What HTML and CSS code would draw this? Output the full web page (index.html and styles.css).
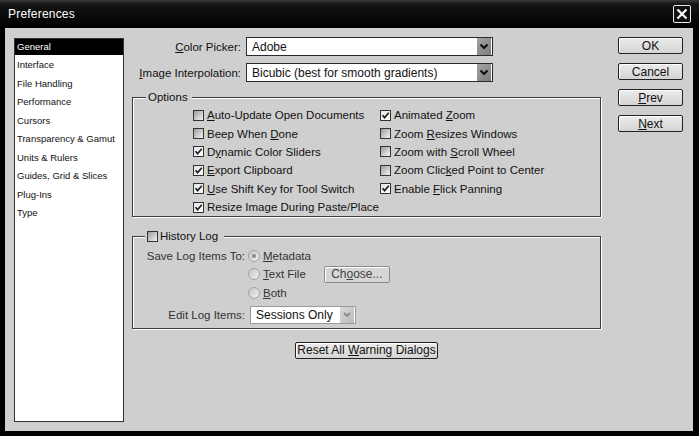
FILE: index.html
```html
<!DOCTYPE html>
<html lang="en">
<head>
    <meta charset="UTF-8">
    <title>Preferences</title>
    <link rel="stylesheet" href="styles.css">
</head>
<body>
<div class="window">
    <div class="titlebar">
        <span class="title">Preferences</span>
        <span class="close">
            <svg width="16" height="16" viewBox="0 0 16 16"><path d="M3.5 3.5 L12.5 12.5 M12.5 3.5 L3.5 12.5" stroke="#fff" stroke-width="2.2" fill="none"/></svg>
        </span>
    </div>
    <div class="client">
        <ul class="nav">
            <li class="active">General</li>
            <li>Interface</li>
            <li>File Handling</li>
            <li>Performance</li>
            <li>Cursors</li>
            <li>Transparency &amp; Gamut</li>
            <li>Units &amp; Rulers</li>
            <li>Guides, Grid &amp; Slices</li>
            <li>Plug-Ins</li>
            <li>Type</li>
        </ul>

        <div class="main">
            <div class="pickers">
                <span class="lbl"><u>C</u>olor Picker:</span>
                <div class="select">
                    <span class="value">Adobe</span>
                    <span class="arrow"><svg width="14" height="17" viewBox="0 0 14 17"><path d="M3.5 6.5 L7 10 L10.5 6.5" stroke="#111" stroke-width="2.2" fill="none"/></svg></span>
                </div>
                <span class="lbl"><u>I</u>mage Interpolation:</span>
                <div class="select">
                    <span class="value">Bicubic (best for smooth gradients)</span>
                    <span class="arrow"><svg width="14" height="17" viewBox="0 0 14 17"><path d="M3.5 6.5 L7 10 L10.5 6.5" stroke="#111" stroke-width="2.2" fill="none"/></svg></span>
                </div>
            </div>

            <fieldset class="group options">
                <legend>Options</legend>
                <div class="checks">
                    <div class="check"><span class="box"></span><span><u>A</u>uto-Update Open Documents</span></div>
                    <div class="check"><span class="box"></span><span>Beep When <u>D</u>one</span></div>
                    <div class="check"><span class="box on"><svg width="9" height="9" viewBox="0 0 9 9"><path d="M1.5 4.2 L3.6 6.6 L7.8 1.8" stroke="#222" stroke-width="1.7" fill="none"/></svg></span><span>D<u>y</u>namic Color Sliders</span></div>
                    <div class="check"><span class="box on"><svg width="9" height="9" viewBox="0 0 9 9"><path d="M1.5 4.2 L3.6 6.6 L7.8 1.8" stroke="#222" stroke-width="1.7" fill="none"/></svg></span><span><u>E</u>xport Clipboard</span></div>
                    <div class="check"><span class="box on"><svg width="9" height="9" viewBox="0 0 9 9"><path d="M1.5 4.2 L3.6 6.6 L7.8 1.8" stroke="#222" stroke-width="1.7" fill="none"/></svg></span><span><u>U</u>se Shift Key for Tool Switch</span></div>
                    <div class="check"><span class="box on"><svg width="9" height="9" viewBox="0 0 9 9"><path d="M1.5 4.2 L3.6 6.6 L7.8 1.8" stroke="#222" stroke-width="1.7" fill="none"/></svg></span><span>Resize Image During Paste/Place</span></div>

                    <div class="check"><span class="box on"><svg width="9" height="9" viewBox="0 0 9 9"><path d="M1.5 4.2 L3.6 6.6 L7.8 1.8" stroke="#222" stroke-width="1.7" fill="none"/></svg></span><span>Animated <u>Z</u>oom</span></div>
                    <div class="check"><span class="box"></span><span>Zoom <u>R</u>esizes Windows</span></div>
                    <div class="check"><span class="box"></span><span>Zoom with <u>S</u>croll Wheel</span></div>
                    <div class="check"><span class="box"></span><span>Zoom Clic<u>k</u>ed Point to Center</span></div>
                    <div class="check"><span class="box on"><svg width="9" height="9" viewBox="0 0 9 9"><path d="M1.5 4.2 L3.6 6.6 L7.8 1.8" stroke="#222" stroke-width="1.7" fill="none"/></svg></span><span>Enable <u>F</u>lick Panning</span></div>
                </div>
            </fieldset>

            <fieldset class="group history">
                <legend><span class="box"></span><span>History Log</span></legend>
                <div class="log">
                    <span class="lbl row1">Save Log Items To:</span>
                    <div class="radio"><span class="dot on"></span><span><u>M</u>etadata</span></div>
                    <div class="radio"><span class="dot"></span><span><u>T</u>ext File</span><span class="btn small"><span>Ch<u>o</u>ose...</span></span></div>
                    <div class="radio"><span class="dot"></span><span><u>B</u>oth</span></div>
                    <span class="lbl row4">Edit Log Items:</span>
                    <div class="select narrow">
                        <span class="value">Sessions Only</span>
                        <span class="arrow"><svg width="14" height="16" viewBox="0 0 14 16"><path d="M4 6 L7 9 L10 6" stroke="#888" stroke-width="1.8" fill="none"/></svg></span>
                    </div>
                </div>
            </fieldset>

            <span class="btn reset"><span>Reset All <u>W</u>arning Dialogs</span></span>
        </div>

        <div class="buttons">
            <span class="btn"><span>OK</span></span>
            <span class="btn"><span>Cancel</span></span>
            <span class="btn"><span><u>P</u>rev</span></span>
            <span class="btn"><span><u>N</u>ext</span></span>
        </div>
    </div>
</div>
</body>
</html>
```

FILE: styles.css
```css
* {
    box-sizing: border-box;
}
html,
body {
    margin: 0;
    padding: 0;
    background: #000;
}
body {
    font-family: "Liberation Sans", Arial, sans-serif;
    font-size: 11.5px;
    color: #111;
}
u {
    text-underline-offset: 1px;
}
.window {
    width: 699px;
    height: 436px;
    padding: 0 6px 5px 5px;
    display: flex;
    flex-direction: column;
    background: #000;
}
.titlebar {
    height: 28px;
    flex: none;
    display: flex;
    align-items: center;
    background: linear-gradient(#3a3a3a 0, #151515 4px, #000 100%);
    margin: 0 -6px 0 -5px;
    padding: 0 8px 0 8px;
}
.title {
    color: #fff;
    font-size: 12px;
    letter-spacing: 0.2px;
}
.close {
    margin-left: auto;
    width: 18px;
    height: 18px;
    border: 1px solid #e8e8e8;
    border-radius: 2px;
    display: flex;
    align-items: center;
    justify-content: center;
    background: #111;
}
.client {
    flex: 1;
    display: flex;
    align-items: flex-start;
    padding: 9px 10px 0 9px;
    background: #cfcfcf;
}
.nav {
    width: 110px;
    height: 384px;
    margin: 1px 0 0 0;
    padding: 0;
    list-style: none;
    background: #fff;
    border: 1px solid #333;
    font-size: 9.5px;
}
.nav li {
    height: 16px;
    line-height: 16px;
    margin-bottom: 2.44px;
    padding-left: 2px;
    white-space: nowrap;
}
.nav li.active {
    background: #000;
    color: #fff;
}
.main {
    width: 469px;
    margin-left: 8px;
    display: flex;
    flex-direction: column;
}
.pickers {
    display: grid;
    grid-template-columns: 109px 247px;
    column-gap: 5px;
    row-gap: 7px;
    align-items: center;
}
.lbl {
    text-align: right;
    white-space: nowrap;
}
.select {
    height: 19px;
    display: flex;
    align-items: center;
    background: #fff;
    border: 1px solid #2a2a2a;
    padding-left: 5px;
}
.select .value {
    font-size: 12px;
}
.select .arrow {
    margin-left: auto;
    margin-right: 1px;
    width: 14px;
    height: 17px;
    display: flex;
    background: linear-gradient(135deg, #a4a4a4, #7c7c7c);
}
.group {
    margin: 8px 0 0 0;
    padding: 0;
    min-width: 0;
    border: 1px solid #3c3c3c;
    box-shadow: 1px 1px 0 #fff, inset 1px 1px 0 #fff;
}
.group legend {
    margin-left: 13px;
    padding: 0 4px 0 2px;
    line-height: 15px;
    background: #cfcfcf;
}
.checks {
    display: grid;
    grid-template-columns: 187px auto;
    grid-template-rows: repeat(6, 18.4px);
    grid-auto-flow: column;
    padding: 1px 0 0 60px;
}
.check {
    display: flex;
    align-items: center;
    gap: 3px;
    white-space: nowrap;
}
.box {
    width: 11px;
    height: 11px;
    flex: none;
    border: 1px solid #333;
    background: linear-gradient(135deg, #9c9c9c, #f4f4f4);
    display: flex;
    align-items: center;
    justify-content: center;
}
.box.on {
    background: linear-gradient(135deg, #e4e4e4, #fff);
}
.history {
    margin-top: 12px;
}
.history legend {
    margin-left: 12px;
    padding: 0 6px 0 2px;
    display: flex;
    align-items: center;
    gap: 2px;
}
.log {
    display: grid;
    grid-template-columns: 103px auto;
    grid-template-rows: 18.5px 18.5px 18.5px 26px;
    column-gap: 3px;
    align-items: center;
    padding: 2px 0 0 9px;
    color: #333;
}
.log .row1 {
    grid-row: 1;
}
.log .radio {
    grid-column: 2;
    display: flex;
    align-items: center;
    gap: 3px;
}
.log .row4 {
    grid-row: 4;
    grid-column: 1;
}
.dot {
    width: 12px;
    height: 12px;
    border-radius: 50%;
    border: 1px solid #a2a2a2;
    background: linear-gradient(135deg, #c4c4c4, #f2f2f2);
    display: flex;
    align-items: center;
    justify-content: center;
}
.dot.on::after {
    content: "";
    width: 4px;
    height: 4px;
    border-radius: 50%;
    background: #8a8a8a;
}
.select.narrow {
    grid-row: 4;
    grid-column: 2;
    width: 106px;
    height: 18px;
    margin-left: 2px;
    border-color: #9a9a9a;
    color: #111;
}
.select.narrow .arrow {
    height: 16px;
    background: linear-gradient(135deg, #d8d8d8, #bcbcbc);
}
.btn {
    height: 17px;
    display: flex;
    align-items: center;
    justify-content: center;
    border: 1px solid #222;
    border-radius: 2px;
    background: linear-gradient(#ececec, #d4d4d4);
    box-shadow: inset 1px 1px 0 #fff;
    color: #111;
    font-size: 12px;
    white-space: nowrap;
}
.btn.small {
    width: 66px;
    height: 17px;
    margin-left: 15px;
    border-color: #8c8c8c;
    background: #d6d6d6;
    color: #444;
}
.btn.reset {
    width: 143px;
    margin-top: 13px;
    align-self: center;
}
.buttons {
    width: 65px;
    margin-left: 17px;
    display: flex;
    flex-direction: column;
    gap: 9px;
}
```
